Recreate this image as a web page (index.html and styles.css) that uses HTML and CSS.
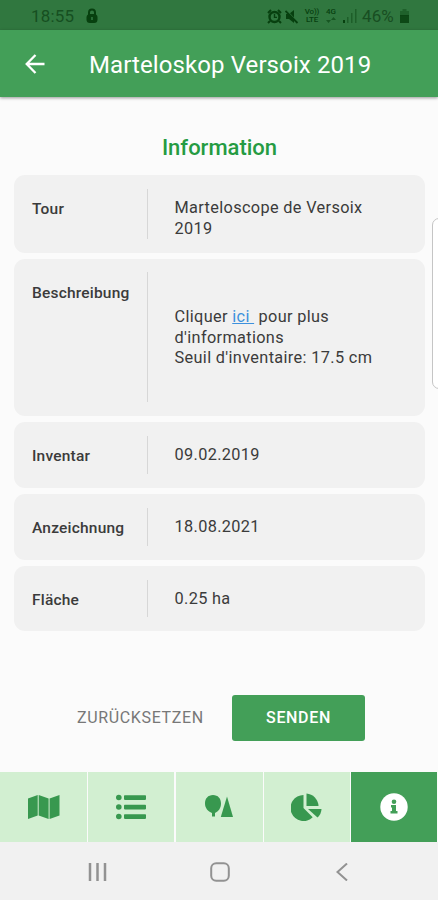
FILE: index.html
```html
<!DOCTYPE html>
<html lang="de">
<head>
<meta charset="utf-8">
<title>Marteloskop Versoix 2019</title>
<link rel="stylesheet" href="styles.css">
</head>
<body>
<div class="phone">
  <div class="status">
    <span class="clock">18:55</span>
    <svg class="lock" width="12" height="16" viewBox="0 0 12 16"><path d="M3 7V4.5a3 3 0 0 1 6 0V7" fill="none" stroke="currentColor" stroke-width="2"/><rect x=".5" y="6" width="11" height="9" rx="3.5" fill="currentColor"/><path d="M6 9v3" stroke="#30773f" stroke-width="1.6"/></svg>
    <div class="indicators">
      <svg width="15" height="15" viewBox="0 0 15 15" fill="none" stroke="currentColor"><circle cx="7.5" cy="8" r="5" stroke-width="2.4"/><path d="M1 4l3-3M14 4l-3-3M3 12l-2 2M12 12l2 2" stroke-width="2"/><path d="M7.5 5v3.4H10" stroke-width="1.4"/></svg>
      <svg class="mute" width="14" height="15" viewBox="0 0 14 15"><path d="M1 5h3l5-4v13l-5-4H1z" fill="currentColor"/><path d="M1 1l12 13" stroke="#30773f" stroke-width="1.6"/><path d="M.5 2l12 12" stroke="currentColor" stroke-width="1.8"/></svg>
      <span class="tiny volte">Vo))<br>LTE</span>
      <span class="tiny net">4G<br><svg width="10" height="6" viewBox="0 0 10 6"><path d="M0 3l2.5 3L5 3zM5 3l2.5-3L10 3z" fill="currentColor" opacity=".6"/></svg></span>
      <svg class="signal" width="14" height="14" viewBox="0 0 14 14" fill="currentColor"><path d="M0 11h2v3H0z"/><path d="M4 8h1.5v6H4zM8 4h1.5v10H8zM12 0h1.500v14H12z" opacity=".45"/></svg>
      <span class="percent">46%</span>
      <svg width="9" height="14" viewBox="0 0 9 14" fill="currentColor"><path d="M2.500 0h4v2H9v5H0V2h2.500z" opacity=".4"/><path d="M0 6h9v8H0z" opacity=".85"/></svg>
    </div>
  </div>
  <header class="appbar">
    <svg class="back" width="20" height="20" viewBox="0 0 20 20" fill="none" stroke="#fff" stroke-width="2.300"><path d="M19.500 10H2M10.500 1L1.700 10l8.800 9"/></svg>
    <h1>Marteloskop Versoix 2019</h1>
  </header>
  <main>
    <h2>Information</h2>
    <dl class="cards">
      <div class="card tour"><dt>Tour</dt><dd>Marteloscope de Versoix<br>2019</dd></div>
      <div class="card description"><dt>Beschreibung</dt><dd>Cliquer <a>ici&nbsp;</a> pour plus<br>d'informations<br>Seuil d'inventaire: 17.5 cm</dd></div>
      <div class="card"><dt>Inventar</dt><dd>09.02.2019</dd></div>
      <div class="card"><dt>Anzeichnung</dt><dd>18.08.2021</dd></div>
      <div class="card"><dt>Fläche</dt><dd>0.25 ha</dd></div>
    </dl>
    <div class="actions"><button class="reset">ZURÜCKSETZEN</button><button class="send">SENDEN</button></div>
    <div class="edge-handle"></div>
  </main>
  <nav class="tabs">
    <div class="tab"><svg width="32" height="26" viewBox="0 0 32 26" fill="currentColor"><path d="M0 4.500L9.700 1v20.500L0 25zM10.700 1l9.900 3.500V25L10.700 21.500zM21.600 4.500L31.500 1v20.500L21.600 25z"/></svg></div>
    <div class="tab"><svg width="30" height="26" viewBox="0 0 30 26" fill="currentColor"><circle cx="2.800" cy="3.500" r="2.800"/><circle cx="2.800" cy="13" r="2.800"/><circle cx="2.800" cy="22.500" r="2.800"/><rect x="8" y="1.300" width="22" height="4.600" rx=".8"/><rect x="8" y="10.800" width="22" height="4.600" rx=".8"/><rect x="8" y="20.300" width="22" height="4.600" rx=".8"/></svg></div>
    <div class="tab"><svg width="28" height="26" viewBox="0 0 28 26" fill="currentColor"><path d="M8 1c5 0 8 3.500 8 8.500 0 4.500-2.500 8-6 9.500V22.500H7V19C3 17.500 0 14 0 9.500 0 4.500 3 1 8 1z"/><path d="M22 2.500L28 23H15.800z"/></svg></div>
    <div class="tab"><svg width="31" height="28" viewBox="0 0 31 28" fill="currentColor"><path d="M12.500 2v13l9.200 9.200A13 13 0 1 1 12.500 2z"/><path d="M15.500.500A13 13 0 0 1 27.500 13h-12z"/><path d="M17 16h13.500a12 12 0 0 1-4 8.500z"/></svg></div>
    <div class="tab active"><svg width="28" height="28" viewBox="0 0 28 28"><circle cx="14" cy="14" r="13.700" fill="#fff"/><circle cx="14" cy="8.700" r="2.300" fill="#439f58"/><path d="M11 12h5v6h1.500v2.500h-7V18H12v-3.500h-1z" fill="#439f58"/></svg></div>
  </nav>
  <div class="system">
    <svg width="19" height="18" viewBox="0 0 19 18"><path d="M2 0v18M9.500 0v18M17 0v18" stroke="currentColor" stroke-width="2.500"/></svg>
    <svg class="home" width="20" height="20" viewBox="0 0 20 20"><rect x="1.200" y="1.200" width="17.600" height="17.600" rx="5" fill="none" stroke="currentColor" stroke-width="2"/></svg>
    <svg width="12" height="18" viewBox="0 0 12 18"><path d="M11 .500L1.500 9l9.500 8.500" fill="none" stroke="currentColor" stroke-width="2"/></svg>
  </div>
</div>
</body>
</html>
```

FILE: styles.css
```css
* { box-sizing: border-box; }
body { margin: 0; font-family: Roboto, "Liberation Sans", sans-serif; background: #fbfbfb; color: #3b3b3b; }
svg { display: block; flex: none; }
.phone { width: 438px; height: 900px; display: flex; flex-direction: column; overflow: hidden; }
.status { height: 30px; flex: none; background: #30773f; color: #07400f; display: flex; align-items: center; padding: 2px 29px 0 31px; font-size: 17px; white-space: nowrap; }
.clock { width: 44px; color: #164f21; letter-spacing: .2px; }
.lock { margin-left: 11px; }
.indicators { display: flex; align-items: center; margin-left: auto; }
.mute { margin-left: 3px; }
.tiny { font-size: 8px; line-height: 8px; font-weight: 500; text-align: center; }
.volte { width: 16px; margin-left: 5px; letter-spacing: -.2px; }
.net { width: 12px; margin-left: 5px; }
.net svg { margin: 1px auto; }
.signal { margin-left: 6px; }
.percent { width: 34px; margin: 0 4px 0 5px; color: #184e22; letter-spacing: .1px; }
.appbar { height: 67px; flex: none; background: #439f58; display: flex; align-items: center; padding: 3px 24px 0; box-shadow: 0 1px 3px #0006; z-index: 1; }
.back { margin: -3px 0 0 1px; }
h1 { margin: 0 0 0 44px; color: #fff; font-size: 24px; line-height: 28px; font-weight: 400; letter-spacing: .1px; white-space: nowrap; }
main { flex: 1; position: relative; padding: 37px 13px 0 14px; }
h2 { margin: 0 0 13px; font-size: 22px; line-height: 28px; font-weight: 500; color: #259b42; text-align: center; }
.cards { margin: 0; display: grid; grid-template-rows: 78px 157px 66px 66px 65px; gap: 6px; }
.card { background: #f1f1f1; border-radius: 11px; display: grid; grid-template-columns: 116px 1fr; padding: 14px 0 14px 18px; }
.card.description { padding-top: 13px; }
dt { padding-top: 11px; font-size: 15.500px; line-height: 18px; font-weight: 500; border-right: 1px solid #d7d7d7; letter-spacing: .2px; white-space: nowrap; }
.description dt { padding-top: 12px; }
dd { margin: 0; padding: 9px 0 0 26.500px; font-size: 16.300px; line-height: 20.500px; letter-spacing: .35px; white-space: nowrap; }
.description dd { padding-top: 35px; }
a { color: #3d91dd; text-decoration: underline; }
.actions { display: flex; margin: 64px 0 0 63px; align-items: center; }
button { border: 0; font: 400 16px/20px Roboto, "Liberation Sans", sans-serif; padding: 0; white-space: nowrap; letter-spacing: .65px; }
.reset { width: 155px; color: #777; background: transparent; text-align: left; }
.send { width: 133px; height: 46px; border-radius: 3px; background: #439f58; color: #fff; font-weight: 500; }
.edge-handle { position: absolute; left: 432px; top: 121px; width: 14px; height: 171px; border: 1px solid #c5c5c5; border-radius: 9px; background: #fff; }
.tabs { height: 70px; flex: none; display: grid; grid-template-columns: 87px 86px 87px 86px 86px; gap: 1.250px; }
.tab { background: #d2efd1; color: #38984f; display: grid; place-items: center; }
.active { background: #439f58; }
.system { height: 58px; flex: none; background: #f1f1f1; color: #929292; display: flex; align-items: center; padding: 2px 90px 0 88px; justify-content: space-between; }
.home { margin: 0 2px 0 -2px; }
```
